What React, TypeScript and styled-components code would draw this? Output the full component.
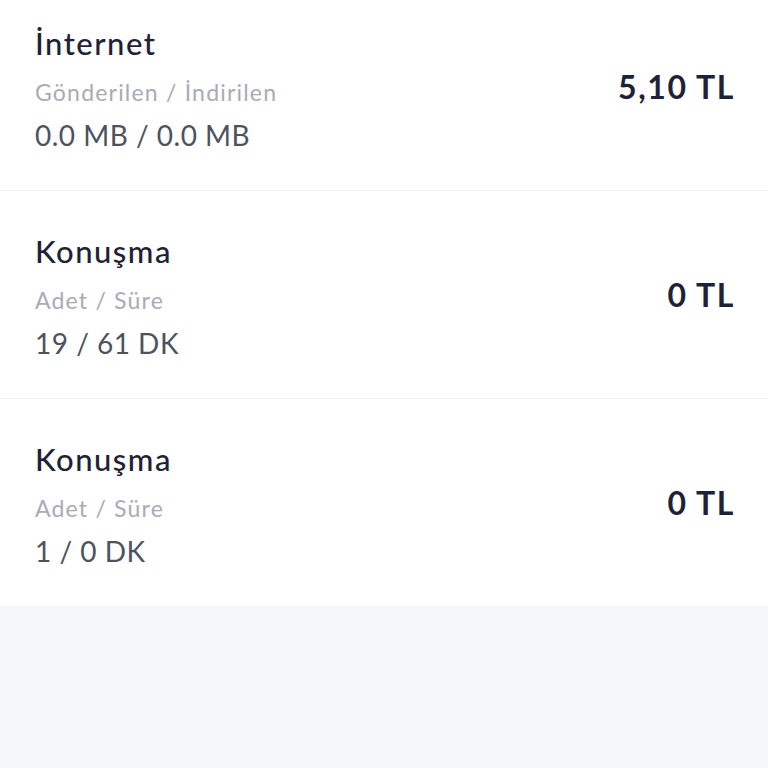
import React from "react";
import styled, { createGlobalStyle } from "styled-components";

const GlobalStyle = createGlobalStyle`
  html, body {
    margin: 0;
    padding: 0;
    background: #f5f6f8;
    font-family: Lato, "Noto Sans", sans-serif;
    -webkit-font-smoothing: antialiased;
  }
  #root { min-height: 768px; overflow: hidden; }
`;

const Page = styled.div`
  height: 768px;
  overflow: hidden;
  background: #f5f6f8;
`;

const List = styled.div`
  background: #ffffff;
  margin-top: -17px;
`;

const Row = styled.div<{ $last?: boolean }>`
  display: flex;
  align-items: center;
  justify-content: space-between;
  height: 207px;
  padding: 0 35px;
  box-sizing: content-box;
  border-bottom: ${(p) => (p.$last ? "none" : "1px solid #eff0f3")};
`;

const Info = styled.div`
  align-self: flex-start;
  display: flex;
  flex-direction: column;
  padding-top: 40px;
`;

const Title = styled.div`
  font-size: 31px;
  font-weight: 500;
  color: #1f2236;
  line-height: 40px;
  letter-spacing: 1.5px;
`;

const Label = styled.div`
  font-size: 23px;
  color: #a7acb6;
  line-height: 44px;
  margin-top: 7px;
  letter-spacing: 1.2px;
`;

const Value = styled.div`
  font-size: 28px;
  color: #4d5260;
  line-height: 44px;
  margin-top: -1px;
  letter-spacing: 0.5px;
`;

const Price = styled.div`
  font-size: 32px;
  font-weight: 700;
  color: #1f2236;
  letter-spacing: 1.6px;
  margin-right: -2px;
`;

type Item = { title: string; label: string; value: string; price: string };

const items: Item[] = [
  { title: "İnternet", label: "Gönderilen / İndirilen", value: "0.0 MB / 0.0 MB", price: "5,10 TL" },
  { title: "Konuşma", label: "Adet / Süre", value: "19 / 61 DK", price: "0 TL" },
  { title: "Konuşma", label: "Adet / Süre", value: "1 / 0 DK", price: "0 TL" },
];

export default function App() {
  return (
    <Page>
      <GlobalStyle />
      <List>
        {items.map((it, i) => (
          <Row key={i} $last={i === items.length - 1}>
            <Info>
              <Title>{it.title}</Title>
              <Label>{it.label}</Label>
              <Value>{it.value}</Value>
            </Info>
            <Price>{it.price}</Price>
          </Row>
        ))}
      </List>
    </Page>
  );
}
